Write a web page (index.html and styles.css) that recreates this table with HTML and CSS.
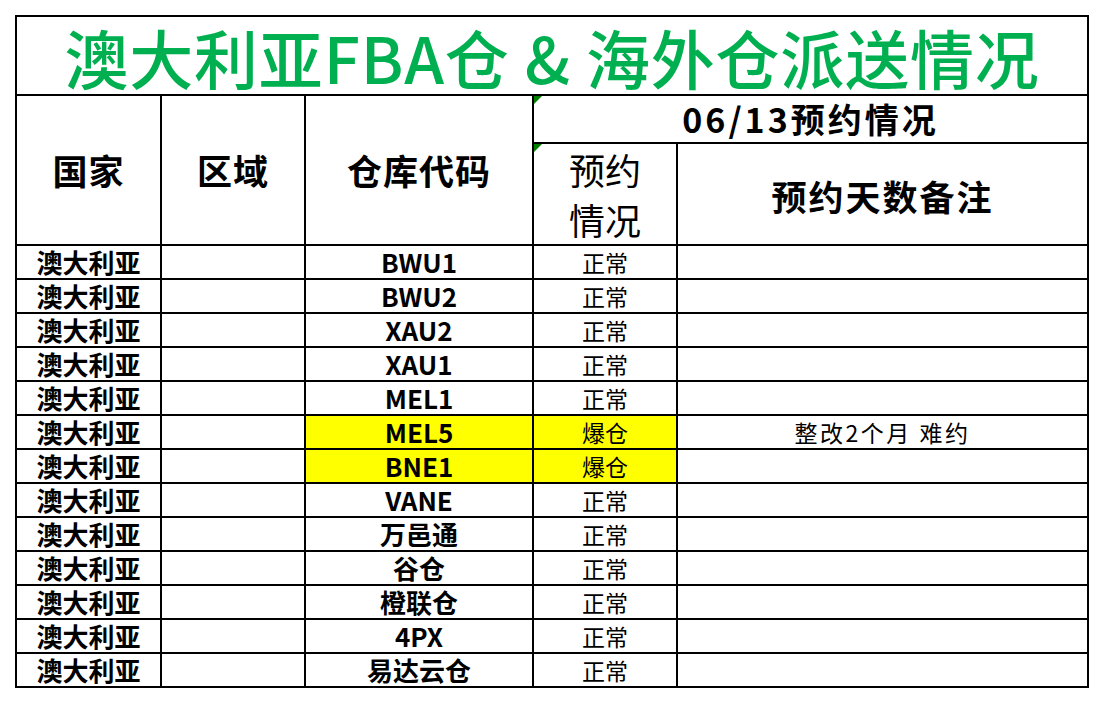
FILE: index.html
```html
<!DOCTYPE html>
<html lang="zh-CN">
<head>
<meta charset="utf-8">
<title>澳大利亚FBA仓 &amp; 海外仓派送情况</title>
<link rel="stylesheet" href="styles.css">
</head>
<body>
<table class="sheet">
  <colgroup>
    <col class="c-country">
    <col class="c-region">
    <col class="c-code">
    <col class="c-status">
    <col class="c-note">
  </colgroup>
  <tr class="r-title">
    <td colspan="5" class="title">澳大利亚FBA仓 &amp; 海外仓派送情况</td>
  </tr>
  <tr class="r-date">
    <td rowspan="2" class="head">国家</td>
    <td rowspan="2" class="head">区域</td>
    <td rowspan="2" class="head">仓库代码</td>
    <td colspan="2" class="date flag">06/13预约情况</td>
  </tr>
  <tr class="r-head">
    <td class="subhead flag">预约<br>情况</td>
    <td class="head wide">预约天数备注</td>
  </tr>
  <tr class="row"><td class="country">澳大利亚</td><td></td><td class="code">BWU1</td><td class="st">正常</td><td class="note"></td></tr>
  <tr class="row"><td class="country">澳大利亚</td><td></td><td class="code">BWU2</td><td class="st">正常</td><td class="note"></td></tr>
  <tr class="row"><td class="country">澳大利亚</td><td></td><td class="code">XAU2</td><td class="st">正常</td><td class="note"></td></tr>
  <tr class="row"><td class="country">澳大利亚</td><td></td><td class="code">XAU1</td><td class="st">正常</td><td class="note"></td></tr>
  <tr class="row"><td class="country">澳大利亚</td><td></td><td class="code">MEL1</td><td class="st">正常</td><td class="note"></td></tr>
  <tr class="row"><td class="country">澳大利亚</td><td></td><td class="code hl">MEL5</td><td class="st hl">爆仓</td><td class="note">整改2个月 难约</td></tr>
  <tr class="row"><td class="country">澳大利亚</td><td></td><td class="code hl">BNE1</td><td class="st hl">爆仓</td><td class="note"></td></tr>
  <tr class="row"><td class="country">澳大利亚</td><td></td><td class="code">VANE</td><td class="st">正常</td><td class="note"></td></tr>
  <tr class="row"><td class="country">澳大利亚</td><td></td><td class="code">万邑通</td><td class="st">正常</td><td class="note"></td></tr>
  <tr class="row"><td class="country">澳大利亚</td><td></td><td class="code">谷仓</td><td class="st">正常</td><td class="note"></td></tr>
  <tr class="row"><td class="country">澳大利亚</td><td></td><td class="code">橙联仓</td><td class="st">正常</td><td class="note"></td></tr>
  <tr class="row"><td class="country">澳大利亚</td><td></td><td class="code">4PX</td><td class="st">正常</td><td class="note"></td></tr>
  <tr class="row"><td class="country">澳大利亚</td><td></td><td class="code">易达云仓</td><td class="st">正常</td><td class="note"></td></tr>
</table>
</body>
</html>
```

FILE: styles.css
```css
html, body {
  margin: 0;
  padding: 0;
  background: #ffffff;
}

body {
  padding: 15px 0 0 15px;
  font-family: "Noto Sans CJK SC", "Noto Sans", sans-serif;
  color: #000000;
}

.sheet {
  border-collapse: collapse;
  table-layout: fixed;
  width: 1072px;
}

.sheet td {
  border: 2px solid #000000;
  padding: 0;
  text-align: center;
  vertical-align: middle;
  white-space: nowrap;
}

.c-country { width: 145px; }
.c-region { width: 144px; }
.c-code { width: 228px; }
.c-status { width: 144px; }
.c-note { width: 411px; }

.r-title { height: 79px; }
.r-date { height: 48px; }
.r-head { height: 99px; }
.row { height: 34px; }

.title {
  color: #00b050;
  font-size: 64px;
  font-weight: 500;
  line-height: 68px;
  letter-spacing: 0.8px;
  padding-top: 6px;
}

.head {
  font-size: 35px;
  font-weight: 700;
  line-height: 44px;
  letter-spacing: 1px;
}

.head.wide {
  letter-spacing: 2px;
  padding-top: 4px;
}

.date {
  font-size: 34px;
  font-weight: 700;
  line-height: 36px;
  letter-spacing: 3px;
  padding-top: 6px;
}

.subhead {
  font-size: 36px;
  font-weight: 400;
  line-height: 50px;
  padding-top: 2px;
}

.flag {
  position: relative;
}

.flag::before {
  content: "";
  position: absolute;
  top: 0;
  left: 0;
  width: 0;
  height: 0;
  border-top: 8px solid #008000;
  border-right: 8px solid transparent;
}

.country {
  font-size: 26px;
  font-weight: 700;
  line-height: 30px;
  padding-top: 3px;
}

.code {
  font-size: 26px;
  font-weight: 700;
  line-height: 30px;
  padding-top: 3px;
}

.st {
  font-size: 23px;
  font-weight: 400;
  line-height: 30px;
  padding-top: 1px;
}

.note {
  font-size: 23px;
  font-weight: 400;
  line-height: 30px;
  letter-spacing: 2.5px;
  padding-top: 1px;
}

.hl {
  background: #ffff00;
}
```
